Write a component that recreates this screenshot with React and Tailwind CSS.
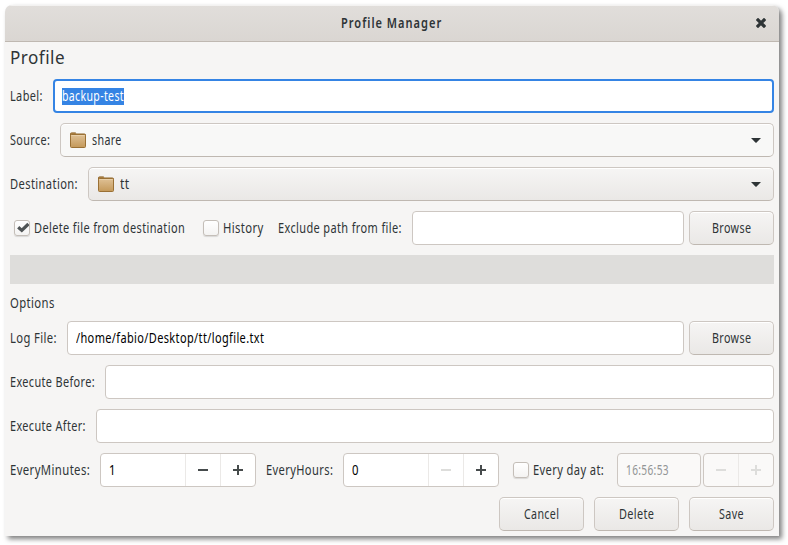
import { useLayoutEffect, useRef, useState } from "react";

/* Condensed text: the glyph run is squeezed to fill the width of its box. */
function Text({ children, className = "" }) {
  const box = useRef(null);
  const run = useRef(null);
  const [scale, setScale] = useState(1);
  useLayoutEffect(() => {
    setScale(box.current.clientWidth / run.current.offsetWidth);
  }, [children]);
  return (
    <span ref={box} className={`block h-[20px] shrink-0 leading-[18px] tracking-[0.5px] whitespace-nowrap ${className}`}>
      <span ref={run} className="inline-block origin-left" style={{ transform: `scaleX(${scale})` }}>
        {children}
      </span>
    </span>
  );
}

function Entry({ className = "", children }) {
  return (
    <div className={`flex h-[34px] items-center rounded-[4px] border border-[#cdc7c2] bg-white px-2 text-black ${className}`}>
      {children}
    </div>
  );
}

function Button({ label, width }) {
  return (
    <button className="flex h-[34px] w-[85px] shrink-0 items-center justify-center rounded-[5px] border border-[#cdc7c2] border-b-[#bfb8b1] bg-linear-to-b from-[#f6f5f4] to-[#eae8e6] shadow-[inset_0_1px_#fff]">
      <Text className={width}>{label}</Text>
    </button>
  );
}

function Folder() {
  return (
    <svg className="h-[17px] w-4 shrink-0" viewBox="0 0 16 17">
      <defs>
        <linearGradient id="folder" x1="0" y1="0" x2="0" y2="1">
          <stop offset="0" stopColor="#dfc196" />
          <stop offset="1" stopColor="#c4995a" />
        </linearGradient>
      </defs>
      <path d="M.5 4V1.8Q.5.9 1.4.9H5.4L6.6 2H14.4Q15.5 2 15.5 3V5Z" fill="#b58a4c" stroke="#8f6427" />
      <path d="M.5 3.5Q.5 2.5 1.5 2.5H14.5Q15.5 2.5 15.5 3.5V14.5Q15.5 15.5 14.5 15.5H1.5Q.5 15.5.5 14.5Z" fill="url(#folder)" stroke="#9a7034" />
      <path d="M1.5 3.5H14.5" stroke="#e8cfa8" />
    </svg>
  );
}

function Combo({ className, children }) {
  return (
    <div className={`flex h-[34px] flex-1 items-center rounded-[5px] border border-[#cdc7c2] border-b-[#bfb8b1] pr-[12px] pl-[9px] shadow-[inset_0_1px_#fff] ${className}`}>
      <Folder />
      <div className="ml-[6px] flex-1">{children}</div>
      <svg className="h-[5px] w-[10px]" viewBox="0 0 10 5">
        <path d="M0 0H10L5.6 4.6Q5 5 4.4 4.6Z" fill="#2e3436" />
      </svg>
    </div>
  );
}

function Checkbox({ checked }) {
  return (
    <span className="flex size-4 shrink-0 items-center justify-center rounded-[3px] border border-[#c4beb8] bg-linear-to-b from-white to-[#f4f3f2] shadow-[0_1px_1px_rgba(0,0,0,0.12)]">
      {checked && (
        <svg className="size-[14px] shrink-0" viewBox="0 0 14 14">
          <path d="M3.2 6.2L6.8 9.4L13.4 3" fill="none" stroke="#4f5455" strokeWidth="3.2" />
        </svg>
      )}
    </span>
  );
}

function Step({ plus, muted }) {
  return (
    <span className={`flex h-full flex-1 items-center justify-center border-l border-[#ebe9e7] ${muted ? "text-[#dddddb]" : "text-[#464b4c]"}`}>
      <svg className="size-[10px]" viewBox="0 0 10 10" fill="currentColor">
        <path d={plus ? "M0 4H4V0H6V4H10V6H6V10H4V6H0Z" : "M0 4H10V6H0Z"} />
      </svg>
    </span>
  );
}

function Spin({ value, muted }) {
  return (
    <div className="flex h-[34px] w-[156px] shrink-0 items-center rounded-[4px] border border-[#cdc7c2] bg-white text-black">
      <div className="w-[84px] pl-2">
        <Text className="w-[7px]">{value}</Text>
      </div>
      <Step muted={muted} />
      <Step plus />
    </div>
  );
}

export default function App() {
  return (
    <div className="h-[545px] w-[788px] overflow-hidden bg-white pt-[5px] pl-[5px] font-['Noto_Sans','Open_Sans',sans-serif] text-[14.6px] text-[#2e3436]">
      <div className="h-[531px] w-[774px] overflow-hidden rounded-t-[7px] bg-[#f6f5f4] shadow-[3px_3px_5px_rgba(0,0,0,0.5)]">
        <header className="flex h-[37px] items-center border-b border-[#bfb8b1] bg-linear-to-b from-[#e1dedb] to-[#dad6d2] pr-[13px] pl-[336px] shadow-[inset_0_1px_#f3f2f1]">
          <Text className="mt-[2px] w-[101px] text-[14.2px] font-semibold tracking-[1.3px]">Profile Manager</Text>
          <svg className="ml-auto size-[10px]" viewBox="0 0 10 10">
            <path d="M2 2L8 8M8 2L2 8" stroke="#2e3436" strokeWidth="3.2" strokeLinecap="square" />
          </svg>
        </header>
        <main className="flex flex-col gap-[10px] px-[5px]">
          <h1 className="h-[27px] pt-[6px] text-[18px]">
            <Text className="w-[55px]">Profile</Text>
          </h1>
          <div className="flex items-center gap-[10px]">
            <Text className="w-[33px]">Label:</Text>
            <div className="flex h-[34px] flex-1 items-center rounded-[4px] border-2 border-[#3584e4] bg-white px-[7px]">
              <div className="h-[17px] bg-[#3584e4] text-white">
                <Text className="-mt-[2px] w-[62px]">backup-test</Text>
              </div>
            </div>
          </div>
          <div className="flex items-center gap-[10px]">
            <Text className="w-[40px]">Source:</Text>
            <Combo className="bg-[#f8f8f7]"><Text className="w-[30px]">share</Text></Combo>
          </div>
          <div className="flex items-center gap-[10px]">
            <Text className="w-[68px]">Destination:</Text>
            <Combo className="bg-linear-to-b from-[#f6f5f4] to-[#eae8e6]"><Text className="w-[10px]">tt</Text></Combo>
          </div>
          <div className="flex items-center pl-[4px]">
            <Checkbox checked />
            <Text className="ml-[4px] w-[151px]">Delete file from destination</Text>
            <span className="ml-[18px] flex"><Checkbox /></span>
            <Text className="ml-[4px] w-[41px]">History</Text>
            <Text className="ml-[14px] w-[124px]">Exclude path from file:</Text>
            <Entry className="mr-[5px] ml-[10px] flex-1" />
            <Button label="Browse" width="w-[39px]" />
          </div>
          <div className="h-[29px] bg-[#dedddb]" />
          <div className="flex h-[17px] items-center"><Text className="w-[45px]">Options</Text></div>
          <div className="flex items-center">
            <Text className="w-[47px]">Log File:</Text>
            <Entry className="mr-[5px] ml-[10px] flex-1"><Text className="w-[188px]">/home/fabio/Desktop/tt/logfile.txt</Text></Entry>
            <Button label="Browse" width="w-[39px]" />
          </div>
          <div className="flex items-center gap-[10px]">
            <Text className="w-[85px]">Execute Before:</Text>
            <Entry className="flex-1" />
          </div>
          <div className="flex items-center gap-[10px]">
            <Text className="w-[76px]">Execute After:</Text>
            <Entry className="flex-1" />
          </div>
          <div className="flex items-center">
            <Text className="mr-[10px] w-[80px]">EveryMinutes:</Text>
            <Spin value="1" />
            <Text className="mx-[10px] w-[67px]">EveryHours:</Text>
            <Spin value="0" muted />
            <span className="ml-[14px] flex"><Checkbox /></span>
            <Text className="ml-[4px] w-[71px]">Every day at:</Text>
            <div className="ml-[13px] flex h-[34px] w-[84px] items-center rounded-[4px] border border-[#cdc7c2] bg-[#faf9f8] pl-2 text-[#929595]">
              <Text className="w-[43px]">16:56:53</Text>
            </div>
            <div className="ml-[2px] flex h-[34px] w-[71px] items-center rounded-[4px] border border-[#cdc7c2] bg-[#faf9f8] [&>span:first-child]:border-l-0">
              <Step muted />
              <Step plus muted />
            </div>
          </div>
          <div className="flex justify-end gap-[10px]">
            <Button label="Cancel" width="w-[35px]" />
            <Button label="Delete" width="w-[35px]" />
            <Button label="Save" width="w-[25px]" />
          </div>
        </main>
      </div>
    </div>
  );
}
